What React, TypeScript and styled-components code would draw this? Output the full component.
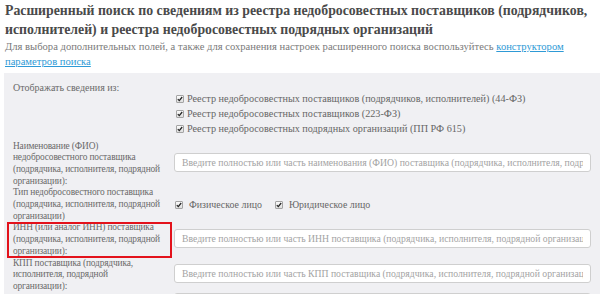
import React from "react";
import styled, { createGlobalStyle } from "styled-components";

const GlobalStyle = createGlobalStyle`
  html, body {
    margin: 0;
    padding: 0;
    background: #ffffff;
  }
  body {
    font-family: "Liberation Serif", "DejaVu Serif", serif;
    color: #666666;
    overflow: hidden;
  }
`;

const Page = styled.div`
  padding: 0 0 0 4px;
  width: 596px;
`;

const Title = styled.h1`
  margin: 0;
  padding: 1px 0 0 1px;
  font-size: 13.8px;
  line-height: 19px;
  font-weight: bold;
  color: #4a4a4a;
`;

const Lead = styled.p`
  margin: 1px 0 0 1px;
  font-size: 10.6px;
  line-height: 14.5px;
  color: #7a7a7a;
`;

const Link = styled.a`
  color: #2e9ad6;
  text-decoration: underline;
`;

const Panel = styled.div`
  margin-top: 4px;
  background: #f0f0f3;
  padding: 9px 9px 0 9px;
`;

const Row = styled.div`
  display: grid;
  grid-template-columns: 161px 1fr;
  align-items: center;
`;

const Label = styled.div`
  font-size: 9.4px;
  letter-spacing: -0.15px;
  line-height: 11.7px;
  color: #6a6a6a;
`;

const Lone = styled(Label)`
  font-size: 10px;
  letter-spacing: 0;
  line-height: 12px;
`;

const SourceList = styled.div`
  grid-column: 2;
  display: flex;
  flex-direction: column;
  margin-top: -3px;
  padding: 0 0 4.5px 2px;
`;

const CheckLine = styled.label`
  display: flex;
  align-items: center;
  gap: 3px;
  height: 15px;
  font-size: 10.2px;
  color: #666666;
`;

const Box = styled.span`
  display: inline-flex;
  align-items: center;
  justify-content: center;
  box-sizing: border-box;
  width: 8px;
  height: 8px;
  border: 1px solid #a4a4a4;
  border-radius: 1px;
  background: linear-gradient(#fbfbfb, #dedede);
  flex: none;
`;

const Options = styled.div`
  display: flex;
  align-items: center;
  gap: 13px;
  padding-left: 1px;
`;

const Option = styled.label`
  display: flex;
  align-items: center;
  gap: 6px;
  font-size: 9.9px;
  color: #666666;
`;

const Field = styled.input`
  box-sizing: border-box;
  width: 100%;
  height: 19px;
  margin: 0 0 3px 0;
  padding: 0 7px;
  border: 1px solid #cfcfcf;
  border-radius: 3px;
  background: #ffffff;
  font-family: inherit;
  font-size: 9.7px;
  color: #555555;
  outline: none;
  &::placeholder {
    color: #a3a3a3;
  }
`;

const Marked = styled(Label)`
  margin: 0 2px 0 -6px;
  padding-left: 6px;
  outline: 2px solid #e3121b;
  outline-offset: -2px;
`;

const Tick = () => (
  <Box>
    <svg width="6" height="6" viewBox="0 0 6 6">
      <path d="M0.8 3.1 L2.3 4.6 L5.2 1" fill="none" stroke="#262626" strokeWidth="1.3" />
    </svg>
  </Box>
);

const sources = [
  "Реестр недобросовестных поставщиков (подрядчиков, исполнителей) (44-ФЗ)",
  "Реестр недобросовестных поставщиков (223-ФЗ)",
  "Реестр недобросовестных подрядных организаций (ПП РФ 615)",
];

export default function App() {
  return (
    <Page>
      <GlobalStyle />
      <Title>
        Расширенный поиск по сведениям из реестра недобросовестных поставщиков (подрядчиков,
        исполнителей) и реестра недобросовестных подрядных организаций
      </Title>
      <Lead>
        Для выбора дополнительных полей, а также для сохранения настроек расширенного поиска
        воспользуйтесь <Link href="#">конструктором параметров поиска</Link>
      </Lead>
      <Panel>
        <Row>
          <Lone>Отображать сведения из:</Lone>
        </Row>
        <Row>
          <SourceList>
            {sources.map((s) => (
              <CheckLine key={s}>
                <Tick />
                {s}
              </CheckLine>
            ))}
          </SourceList>
        </Row>
        <Row>
          <Label>
            Наименование (ФИО) недобросовестного поставщика (подрядчика, исполнителя, подрядной
            организации):
          </Label>
          <Field placeholder="Введите полностью или часть наименования (ФИО) поставщика (подрядчика, исполнителя, подрядной организации)" />
        </Row>
        <Row>
          <Label>
            Тип недобросовестного поставщика (подрядчика, исполнителя, подрядной организации)
          </Label>
          <Options>
            <Option>
              <Tick />
              Физическое лицо
            </Option>
            <Option>
              <Tick />
              Юридическое лицо
            </Option>
          </Options>
        </Row>
        <Row>
          <Marked>
            ИНН (или аналог ИНН) поставщика (подрядчика, исполнителя, подрядной организации):
          </Marked>
          <Field placeholder="Введите полностью или часть ИНН поставщика (подрядчика, исполнителя, подрядной организации)" />
        </Row>
        <Row>
          <Label>
            КПП поставщика (подрядчика, исполнителя, подрядной
            <br />
            организации):
          </Label>
          <Field placeholder="Введите полностью или часть КПП поставщика (подрядчика, исполнителя, подрядной организации)" />
        </Row>
        <Row>
          <Label>Номер реестровой записи:</Label>
          <Field placeholder="Введите полностью или часть номера реестровой записи" />
        </Row>
      </Panel>
    </Page>
  );
}
